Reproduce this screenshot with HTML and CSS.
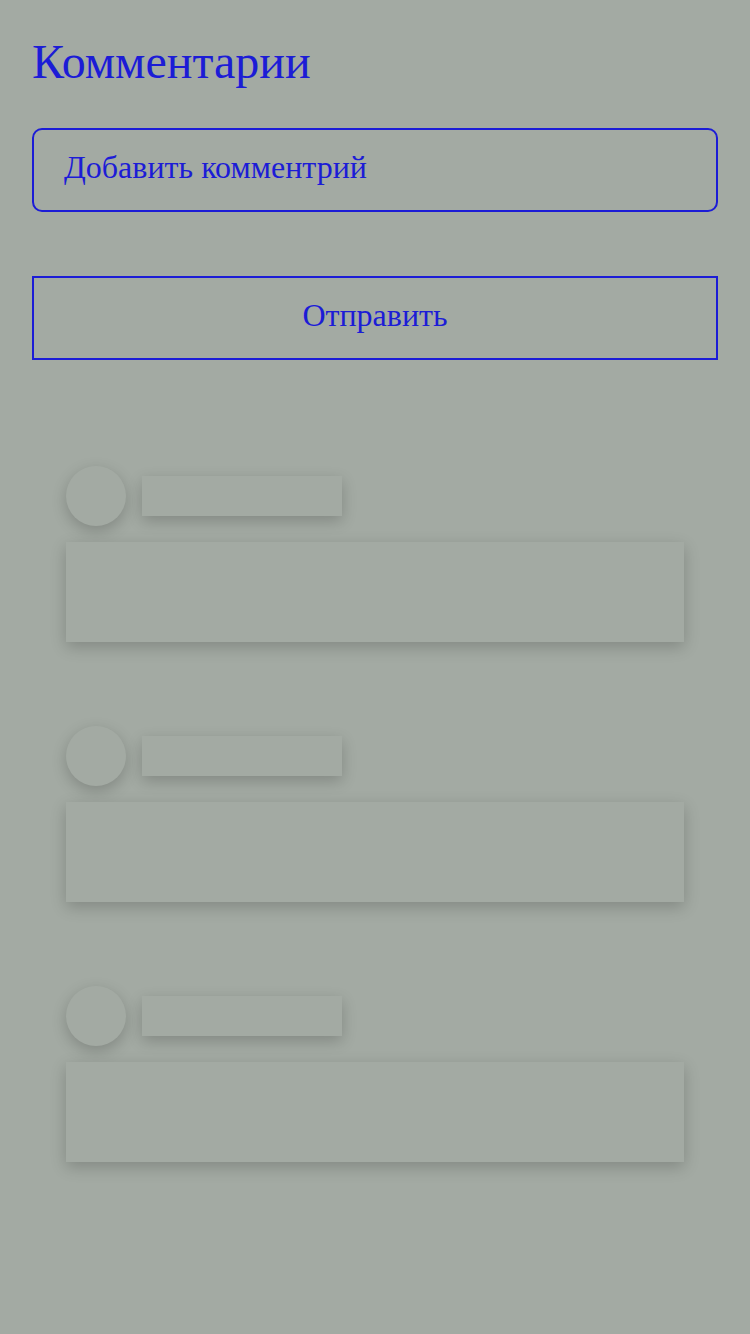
FILE: index.html
```html
<!DOCTYPE html>
<html lang="ru">
<head>
<meta charset="utf-8">
<link rel="stylesheet" href="styles.css">
</head>
<body>
<main class="page">
  <h1 class="title">Комментарии</h1>
  <div class="field">Добавить комментрий</div>
  <button class="send">Отправить</button>
  <section class="list">
    <div class="item">
      <div class="head"><div class="avatar"></div><div class="name"></div></div>
      <div class="text"></div>
    </div>
    <div class="item">
      <div class="head"><div class="avatar"></div><div class="name"></div></div>
      <div class="text"></div>
    </div>
    <div class="item">
      <div class="head"><div class="avatar"></div><div class="name"></div></div>
      <div class="text"></div>
    </div>
  </section>
</main>
</body>
</html>
```
FILE: styles.css
```css
html, body {
  margin: 0;
  padding: 0;
  background: #a3aaa3;
}
body {
  font-family: "Liberation Serif", "Times New Roman", serif;
  color: #1c1cd6;
  min-height: 1334px;
}
.page {
  padding: 0 32px;
  display: flex;
  flex-direction: column;
}
.title {
  margin: 34px 0 0;
  font-size: 48px;
  line-height: 56px;
  font-weight: normal;
}
.field {
  margin-top: 38px;
  height: 80px;
  border: 2px solid #1c1cd6;
  border-radius: 10px;
  padding: 0 30px 6px;
  box-sizing: content-box;
  display: flex;
  align-items: center;
  font-size: 32px;
  height: 74px;
}
.send {
  margin-top: 64px;
  height: 84px;
  border: 2px solid #1c1cd6;
  background: transparent;
  color: #1c1cd6;
  font-family: inherit;
  font-size: 32px;
  padding: 0 0 6px;
}
.list {
  margin-top: 106px;
  padding: 0 34px;
  display: flex;
  flex-direction: column;
  gap: 84px;
}
.item {
  display: flex;
  flex-direction: column;
  gap: 16px;
}
.head {
  display: flex;
  align-items: center;
  gap: 16px;
}
.avatar, .name, .text {
  background: #a3aaa3;
  box-shadow: 0 5px 15px rgba(0, 0, 0, 0.2);
}
.avatar {
  width: 60px;
  height: 60px;
  border-radius: 50%;
}
.name {
  width: 200px;
  height: 40px;
}
.text {
  height: 100px;
}
```
